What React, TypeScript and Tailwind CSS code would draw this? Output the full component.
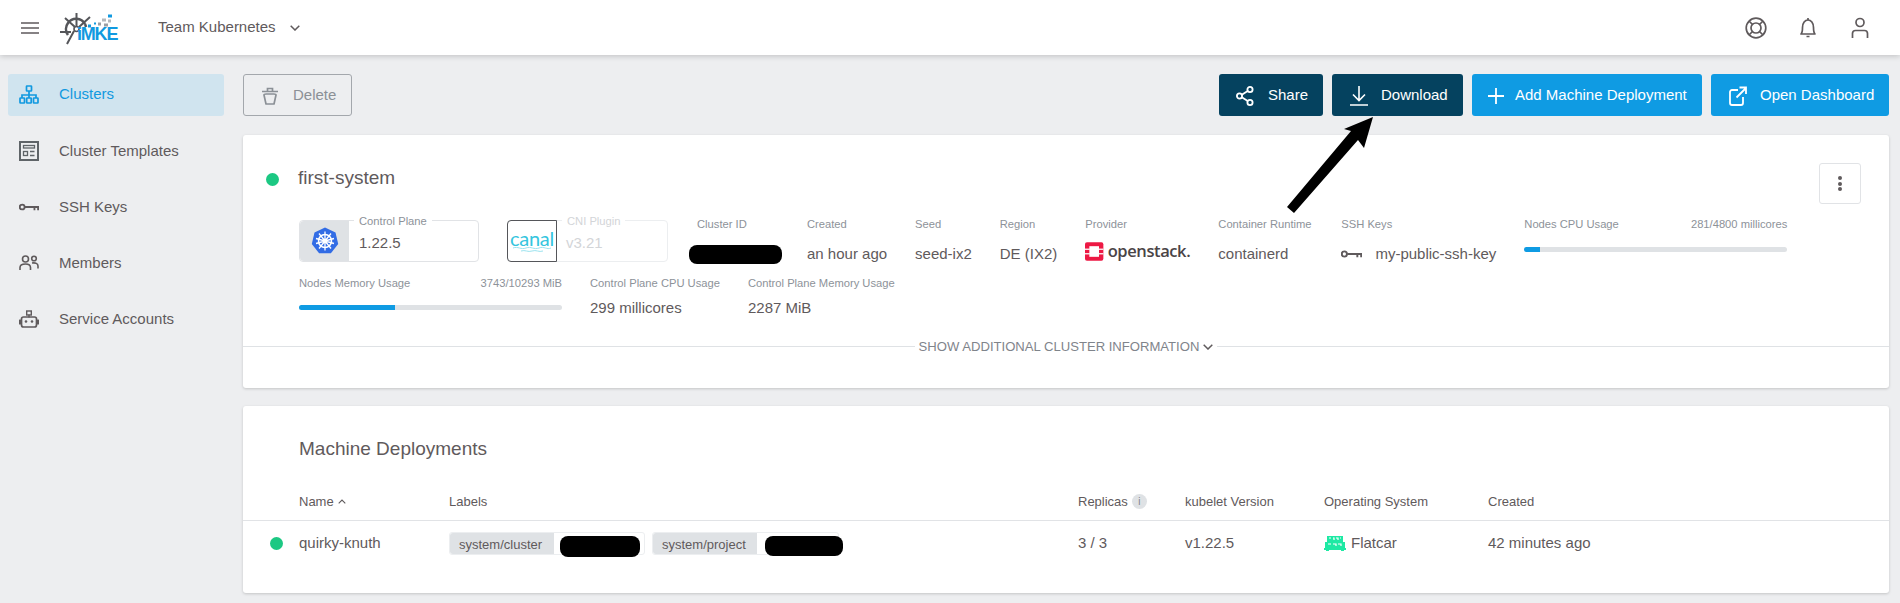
const sans = "font-['Liberation_Sans',Arial,sans-serif]";

function Hamburger() {
  return (
    <svg width="18" height="12" viewBox="0 0 18 12" fill="none" stroke="#5f5a5c" strokeWidth="1.6">
      <path d="M0 1h18M0 6h18M0 11h18" />
    </svg>
  );
}

function Logo() {
  return (
    <div className="relative w-[58px] h-[34px]">
      <svg width="58" height="34" viewBox="0 0 58 34" fill="none" className="absolute left-0 top-0">
        <g stroke="#55565a">
          <path strokeWidth="2.6" d="M25 13a10 10 0 0 0-17-1 10 10 0 0 0 0 12" />
          <path strokeWidth="2.6" d="M25 13a10 10 0 0 1 1 3" />
          <circle cx="16.500" cy="18" r="2.5" strokeWidth="1.6" />
          <path strokeWidth="2" d="M16.500 2v14M0 21h11M5 7l10 9M30 6l-11 10M14 20l-7 13" />
        </g>
        <rect x="48" y="3.500" width="4" height="3" fill="#1199e0" />
        <rect x="42" y="7.500" width="4" height="3" fill="#b5b8bc" />
        <rect x="48" y="8.500" width="3" height="3" fill="#b5b8bc" />
        <rect x="38" y="11.500" width="3" height="3" fill="#9b9ea3" />
        <rect x="44" y="12.500" width="4" height="3" fill="#9b9ea3" />
        <rect x="34" y="11.500" width="2" height="2" fill="#1199e0" />
        <rect x="28" y="13.500" width="3" height="3" fill="#1199e0" />
      </svg>
      <span className="absolute left-[17px] top-[13px] text-[18px] leading-[20px] font-bold tracking-[-1.2px] text-[#1199e0]">iMKE</span>
    </div>
  );
}

function TopIcons() {
  return (
    <div className="flex items-center gap-[30px] text-[#5f5a5c]">
      <svg width="22" height="22" viewBox="0 0 22 22" fill="none" stroke="currentColor" strokeWidth="1.7">
        <circle cx="11" cy="11" r="9.8" />
        <circle cx="11" cy="11" r="5" />
        <path d="M4 4l3.5 3.5M18 4l-3.5 3.5M4 18l3.5-3.5M18 18l-3.5-3.5" />
      </svg>
      <svg width="22" height="22" viewBox="0 0 22 22" fill="none" stroke="currentColor" strokeWidth="1.7">
        <path d="M4 17c1.500-1.500 1.500-3 1.500-6.500C5.500 6 8 3 11 3s5.500 3 5.500 7.500c0 3.500 0 5 1.500 6.500z" strokeLinejoin="round" />
        <path d="M9.500 19.500h3M11 1v2" />
      </svg>
      <svg width="22" height="22" viewBox="0 0 22 22" fill="none" stroke="currentColor" strokeWidth="1.7">
        <circle cx="11" cy="5.500" r="4" />
        <path d="M3.500 21v-4.500a3 3 0 0 1 3-3h9a3 3 0 0 1 3 3V21" />
      </svg>
    </div>
  );
}

function ClusterIcon({ color }: { color: string }) {
  return (
    <svg width="20" height="19" viewBox="0 0 20 19" fill="none" stroke={color} strokeWidth="1.7">
      <rect x="7.500" y="1" width="5" height="5" rx="0.500" />
      <rect x="1" y="13" width="4.500" height="5" rx="0.500" />
      <rect x="7.700" y="13" width="4.500" height="5" rx="0.500" />
      <rect x="14.500" y="13" width="4.500" height="5" rx="0.500" />
      <path d="M10 6v7M3 13v-3h14v3" />
    </svg>
  );
}

function TemplatesIcon() {
  return (
    <svg width="20" height="20" viewBox="0 0 20 20" fill="none" stroke="#5f6468" strokeWidth="2">
      <rect x="1" y="1" width="18" height="18" />
      <rect x="4.500" y="4.500" width="11" height="2.500" strokeWidth="1.300" />
      <rect x="4.500" y="10.500" width="4" height="4" strokeWidth="1.300" />
      <path d="M11 10.500h4.500M11 14.500h4.500" strokeWidth="1.500" />
    </svg>
  );
}

function KeyIcon() {
  return (
    <svg width="22" height="10" viewBox="0 0 22 10" fill="none" stroke="#5f5a5c" strokeWidth="2">
      <circle cx="3.500" cy="5" r="2.700" />
      <path d="M6.500 5H22M17 5v3.500M21 5v3.500" />
    </svg>
  );
}

function MembersIcon() {
  return (
    <svg width="20" height="16" viewBox="0 0 20 16" fill="none" stroke="#5f5a5c" strokeWidth="1.600">
      <circle cx="6.500" cy="4" r="3" />
      <circle cx="15" cy="3.500" r="2.300" />
      <path d="M1 15v-2.500C1 10 3 9 6.500 9s5 1 5 3.500V15M13 8c3.500-.500 6 .500 6 3v2.500" />
    </svg>
  );
}

function RobotIcon() {
  return (
    <svg width="20" height="18" viewBox="0 0 20 18" fill="#5f5a5c" stroke="none">
      <rect x="7.700" y="1" width="4.600" height="4" fill="none" stroke="#5f5a5c" strokeWidth="1.400" />
      <rect x="9.300" y="4.500" width="1.400" height="3" />
      <rect x="2.500" y="7" width="15" height="10" rx="2" fill="none" stroke="#5f5a5c" strokeWidth="1.700" />
      <rect x="0" y="9.500" width="2" height="5" rx="0.500" />
      <rect x="18" y="9.500" width="2" height="5" rx="0.500" />
      <circle cx="7" cy="11.500" r="1.300" />
      <circle cx="13" cy="11.500" r="1.300" />
    </svg>
  );
}

function TrashIcon() {
  return (
    <svg width="16" height="18" viewBox="0 0 16 18" fill="none" stroke="#8b9096" strokeWidth="1.700">
      <path d="M0 4.500h16M5.500 4V1.500h5V4" />
      <path d="M2 8c0-1 1-1 2-1h8c1 0 2 0 2 1l-2 9H4z" strokeLinejoin="round" />
    </svg>
  );
}

function ShareIcon() {
  return (
    <svg width="18" height="20" viewBox="0 0 18 20" fill="none" stroke="white" strokeWidth="1.800">
      <circle cx="14" cy="3.500" r="2.600" />
      <circle cx="3.500" cy="10" r="2.600" />
      <circle cx="14" cy="16.500" r="2.600" />
      <path d="M5.800 8.700l5.900-3.800M5.800 11.300l5.900 3.800" />
    </svg>
  );
}

function DownloadIcon() {
  return (
    <svg width="18" height="20" viewBox="0 0 18 20" fill="none" stroke="white" strokeWidth="1.600">
      <path d="M9 0v14M3 8.500l6 6 6-6M0 19h18" />
    </svg>
  );
}

function PlusIcon() {
  return (
    <svg width="16" height="16" viewBox="0 0 16 16" fill="none" stroke="white" strokeWidth="1.800">
      <path d="M8 0v16M0 8h16" />
    </svg>
  );
}

function OpenIcon() {
  return (
    <svg width="18" height="20" viewBox="0 0 18 20" fill="none" stroke="white" strokeWidth="1.800">
      <path d="M9 4H3a2 2 0 0 0-2 2v11a2 2 0 0 0 2 2h9a2 2 0 0 0 2-2v-6" />
      <path d="M7.500 11.500L17 2M10.500 1.500H17V8" />
    </svg>
  );
}

function K8sIcon() {
  return (
    <svg width="28" height="28" viewBox="0 0 28 28">
      <path d="M14 .500l10.500 5 2.700 11.500-7.300 9.300H8.100L.800 17l2.700-11.500z" fill="#326ce5" />
      <g fill="none" stroke="white">
        <circle cx="14" cy="14" r="6.500" strokeWidth="1.500" />
        <circle cx="14" cy="14" r="1.700" strokeWidth="1.300" />
        <path strokeWidth="1.300" d="M14 4.500v19M5 11.500l18 5M23 11.500l-18 5M8 6.500l12 15M20 6.500l-12 15" />
      </g>
    </svg>
  );
}

function OpenstackIcon() {
  return (
    <svg width="19" height="19" viewBox="0 0 19 19">
      <rect width="19" height="19" rx="2" fill="#ed1944" />
      <rect x="4.500" y="4" width="10" height="11" fill="white" />
      <rect x="0" y="6.500" width="5" height="1.300" fill="white" />
      <rect x="0" y="11.200" width="5" height="1.300" fill="white" />
      <rect x="14" y="6.500" width="5" height="1.300" fill="white" />
      <rect x="14" y="11.200" width="5" height="1.300" fill="white" />
    </svg>
  );
}

function FlatcarIcon() {
  return (
    <svg width="22" height="15" viewBox="0 0 22 15">
      <rect x="3" y="0" width="16" height="6" fill="#1ee9a4" />
      <rect x="1" y="6" width="20" height="6" fill="#1ee9a4" />
      <rect x="0" y="12" width="22" height="2" fill="#1ee9a4" />
      <path d="M5 2h2M9 2h1v2M12 2h2v2M16 2h1M4 8h3M9 8h3v2M14 8h3v2" stroke="white" strokeWidth="1.200" fill="none" />
      <rect x="2" y="14" width="3" height="1" fill="#1ee9a4" />
      <rect x="17" y="14" width="3" height="1" fill="#1ee9a4" />
    </svg>
  );
}

function CanalMark() {
  return (
    <div className="flex flex-col items-center">
      <span className="font-['Lato',sans-serif] text-[20px] leading-[16px] tracking-[-0.3px] text-[#35c5de]">canal</span>
      <svg width="38" height="7" viewBox="0 0 38 7" fill="none" stroke="#9be3ef" strokeWidth="1">
        <path d="M0 2c5-2 8 2 13 0s8 2 13 0 8 2 12 0M8 5c4-1.500 7 1.500 11 0s7 1.500 11 0" />
      </svg>
    </div>
  );
}

function Chevron({ className }: { className: string }) {
  return (
    <svg className={className} viewBox="0 0 10 6" fill="none" stroke="#5f5a5c" strokeWidth="1.500">
      <path d="M.700 .700L5 5l4.300-4.300" />
    </svg>
  );
}

function Label({ children }: { children: React.ReactNode }) {
  return <div className="text-[11.2px] leading-4 text-[#8d9299] whitespace-nowrap">{children}</div>;
}

function Info({ label, value, gap, className = "" }: { label: string; value: React.ReactNode; gap: string; className?: string }) {
  return (
    <div className={`shrink-0 ${className}`}>
      <Label>{label}</Label>
      <div className={`${gap} text-[15px] leading-5 text-[#5f5a5c] whitespace-nowrap`}>{value}</div>
    </div>
  );
}

function Usage({ label, amount, percent, gap }: { label: string; amount: string; percent: number; gap: string }) {
  return (
    <div className="w-[263px] shrink-0">
      <div className="flex justify-between">
        <Label>{label}</Label>
        <Label>{amount}</Label>
      </div>
      <div className={`${gap} h-[5px] rounded-sm bg-[#dfe2e5] overflow-hidden`}>
        <div className="h-full bg-[#0f9be3]" style={{ width: `${percent}%` }} />
      </div>
    </div>
  );
}

function Redacted({ className }: { className: string }) {
  return <div className={`bg-black rounded-[8px] ${className}`} />;
}

function KeyedBox({ label, value, wide, faded, icon, iconClass }: { label: string; value: string; wide: string; faded?: boolean; icon: React.ReactNode; iconClass: string }) {
  return (
    <div className={`relative ${wide} h-[42px] mt-[4px] shrink-0 flex rounded-[4px] border ${faded ? "border-[#eceef0]" : "border-[#e1e3e6]"}`}>
      <div className={`${iconClass} shrink-0 flex items-center justify-center`}>{icon}</div>
      <div className={`pl-[10px] pt-[12px] text-[15px] leading-5 ${faded ? "text-[#d3d5d8]" : "text-[#5f5a5c]"}`}>{value}</div>
      <div className={`absolute top-[-8px] px-[5px] bg-white text-[11.2px] leading-4 whitespace-nowrap left-[54px] ${faded ? "text-[#d3d5d8]" : "text-[#8d9299]"}`}>{label}</div>
    </div>
  );
}

const navItems = [
  { label: "Clusters", icon: <ClusterIcon color="#1199e0" />, active: true },
  { label: "Cluster Templates", icon: <TemplatesIcon /> },
  { label: "SSH Keys", icon: <KeyIcon /> },
  { label: "Members", icon: <MembersIcon /> },
  { label: "Service Accounts", icon: <RobotIcon /> },
];

const tableCols = "grid grid-cols-[56px_150px_629px_107px_139px_164px_1fr] items-center";

export default function App() {
  return (
    <div className={`${sans} relative h-[603px] overflow-hidden bg-[#edeef0]`}>
      {/* Header */}
      <header className="h-[55px] bg-white shadow-[0_1px_6px_rgba(0,0,0,0.2)] flex items-center pl-[21px] pr-[29px] relative z-10">
        <Hamburger />
        <div className="ml-[21px]"><Logo /></div>
        <span className="ml-[40px] text-[15px] text-[#5f5a5c]">Team Kubernetes</span>
        <Chevron className="ml-[14px] w-[10px] h-[6px]" />
        <div className="ml-auto"><TopIcons /></div>
      </header>

      <div className="flex">
        {/* Sidebar */}
        <aside className="w-[243px] shrink-0 pt-[19px] pl-[8px] pr-[19px] flex flex-col gap-[14px]">
          {navItems.map((item) => (
            <div
              key={item.label}
              className={`h-[42px] rounded-[3px] flex items-center pl-[11px] ${item.active ? "pb-[2px] bg-[#d0e4ef] text-[#1199e0]" : "text-[#5f5a5c]"}`}
            >
              <span className="w-[20px] flex justify-center">{item.icon}</span>
              <span className="ml-[20px] text-[15px]">{item.label}</span>
            </div>
          ))}
        </aside>

        {/* Main */}
        <main className="flex-1 pr-[11px] pt-[19px]">
          <div className="flex items-center gap-[9px] h-[42px]">
            <button className="h-[42px] w-[109px] mr-auto rounded-[3px] border border-[#a3a7ac] flex items-center pl-[18px] pt-px text-[15px] text-[#8b9096]">
              <TrashIcon />
              <span className="ml-[15px]">Delete</span>
            </button>
            <button className="h-[42px] w-[104px] rounded-[3px] bg-[#05425f] text-white flex items-center pl-[17px] pt-px text-[15px]">
              <ShareIcon />
              <span className="ml-[14px]">Share</span>
            </button>
            <button className="h-[42px] w-[131px] rounded-[3px] bg-[#05425f] text-white flex items-center pl-[18px] pt-px text-[15px]">
              <DownloadIcon />
              <span className="ml-[13px]">Download</span>
            </button>
            <button className="h-[42px] w-[230px] rounded-[3px] bg-[#0f9be3] text-white flex items-center pl-[16px] pt-px text-[15px]">
              <PlusIcon />
              <span className="ml-[11px]">Add Machine Deployment</span>
            </button>
            <button className="h-[42px] w-[178px] rounded-[3px] bg-[#0f9be3] text-white flex items-center pl-[18px] pt-px text-[15px]">
              <OpenIcon />
              <span className="ml-[13px]">Open Dashboard</span>
            </button>
          </div>

          {/* Cluster card */}
          <section className="relative mt-[19px] h-[253px] rounded-[3px] bg-white shadow-[0_1px_3px_rgba(0,0,0,0.18)]">
            <div className="flex items-start h-[81px] pt-[28px] pr-[28px] pl-[23px]">
              <span className="mt-[10px] w-[13px] h-[13px] rounded-full bg-[#1cc883]" />
              <span className="ml-[19px] mt-[3px] text-[19px] leading-6 text-[#5f5a5c]">first-system</span>
              <button className="ml-auto w-[42px] h-[41px] rounded-[3px] border border-[#e1e3e6] flex flex-col items-center justify-center gap-[1.5px]">
                <i className="w-[4px] h-[4px] rounded-full bg-[#5f5a5c]" />
                <i className="w-[4px] h-[4px] rounded-full bg-[#5f5a5c]" />
                <i className="w-[4px] h-[4px] rounded-full bg-[#5f5a5c]" />
              </button>
            </div>

            <div className="flex flex-wrap gap-x-7 pl-[56px] pr-[28px]">
              {/* First row */}
              <div className="flex gap-x-7 w-full h-[59px]">
                <KeyedBox
                  label="Control Plane"
                  value="1.22.5"
                  wide="w-[180px]"
                  icon={<K8sIcon />}
                  iconClass="w-[49px] bg-[#dfe2e5] rounded-l-[4px]"
                />
                <KeyedBox
                  label="CNI Plugin"
                  value="v3.21"
                  wide="w-[161px]"
                  faded
                  icon={<CanalMark />}
                  iconClass="w-[50px] -m-px h-[42px] border border-[#55565a] rounded-l-[4px]"
                />
                <div className="relative w-[82px] ml-px shrink-0">
                  <Label>Cluster ID</Label>
                  <Redacted className="absolute left-[-8px] top-[29px] w-[93px] h-[19px]" />
                </div>
                <Info label="Created" value="an hour ago" gap="mt-[12px]" />
                <Info label="Seed" value="seed-ix2" gap="mt-[12px]" />
                <Info label="Region" value="DE (IX2)" gap="mt-[12px]" />
                <div className="w-[105px] shrink-0">
                  <Label>Provider</Label>
                  <div className="mt-[10px] flex items-center gap-[4px]">
                    <OpenstackIcon />
                    <span className="font-['Open_Sans',sans-serif] font-semibold text-[16.5px] leading-[19px] tracking-[-0.4px] -mt-[3px] text-[#4a4446]">openstack.</span>
                  </div>
                </div>
                <Info label="Container Runtime" value="containerd" gap="mt-[12px]" className="w-[95px]" />
                <div className="w-[155px] shrink-0">
                  <Label>SSH Keys</Label>
                  <div className="mt-[12px] flex items-center gap-[13px] text-[15px] leading-5 text-[#5f5a5c]">
                    <KeyIcon />
                    <span className="whitespace-nowrap">my-public-ssh-key</span>
                  </div>
                </div>
                <Usage label="Nodes CPU Usage" amount="281/4800 millicores" percent={6} gap="mt-[15px]" />
              </div>

              {/* Second row */}
              <Usage label="Nodes Memory Usage" amount="3743/10293 MiB" percent={36.500} gap="mt-[14px]" />
              <Info label="Control Plane CPU Usage" value="299 millicores" gap="mt-[7px]" />
              <Info label="Control Plane Memory Usage" value="2287 MiB" gap="mt-[7px]" />
            </div>

            <div className="absolute left-0 right-0 top-[203px] flex items-center">
              <div className="flex-1 h-px bg-[#dfe2e5]" />
              <span className="px-[4px] pt-px text-[13.1px] leading-4 text-[#7f848b] flex items-center gap-[4px]">
                SHOW ADDITIONAL CLUSTER INFORMATION
                <Chevron className="w-[10px] h-[6px]" />
              </span>
              <div className="flex-1 h-px bg-[#dfe2e5]" />
            </div>
          </section>

          {/* Machine deployments card */}
          <section className="mt-[18px] h-[187px] rounded-[3px] bg-white shadow-[0_1px_3px_rgba(0,0,0,0.18)]">
            <h2 className="pl-[56px] pt-[31px] text-[19px] leading-6 text-[#5f5a5c]">Machine Deployments</h2>
            <div className={`${tableCols} mt-[22px] h-[38px] border-b-[1.500px] border-[#e1e3e6] text-[13px] text-[#5f5a5c]`}>
              <span />
              <span className="flex items-center gap-[4px]">
                Name
                <svg width="8" height="5" viewBox="0 0 8 5" fill="none" stroke="#5f5a5c" strokeWidth="1.100">
                  <path d="M.700 4.300L4 1l3.300 3.300" />
                </svg>
              </span>
              <span>Labels</span>
              <span className="flex items-center gap-[4px]">
                Replicas
                <span className="w-[15px] h-[15px] rounded-full bg-[#dfe2e5] text-[10px] leading-[15px] text-center text-[#7f848b]">i</span>
              </span>
              <span>kubelet Version</span>
              <span>Operating System</span>
              <span>Created</span>
            </div>
            <div className={`${tableCols} h-[44px] text-[14px] text-[#5f5a5c]`}>
              <span className="ml-[27px] w-[13px] h-[13px] rounded-full bg-[#1cc883]" />
              <span className="text-[15px]">quirky-knuth</span>
              <div className="flex gap-[7px] text-[13px]">
                <div className="relative w-[196px] h-[23px] rounded-[3px] border border-[#eceef0]">
                  <div className="w-[104px] h-full bg-[#dfe2e5] rounded-l-[3px] pl-[9px] leading-[23px]">system/cluster</div>
                  <Redacted className="absolute left-[110px] top-[3px] w-[80px] h-[21px]" />
                </div>
                <div className="relative w-[187px] h-[23px] rounded-[3px] border border-[#eceef0]">
                  <div className="w-[104px] h-full bg-[#dfe2e5] rounded-l-[3px] pl-[9px] leading-[23px]">system/project</div>
                  <Redacted className="absolute left-[112px] top-[3px] w-[78px] h-[20px]" />
                </div>
              </div>
              <span className="text-[15px]">3 / 3</span>
              <span className="text-[15px]">v1.22.5</span>
              <span className="flex items-center gap-[5px] text-[15px]">
                <FlatcarIcon />
                Flatcar
              </span>
              <span className="text-[15px]">42 minutes ago</span>
            </div>
          </section>
        </main>
      </div>

      {/* Annotation arrow */}
      <svg className="absolute left-[1280px] top-[110px] z-20" width="100" height="110" viewBox="0 0 100 110">
        <polygon points="93,7 84,38 78,30 14,103 7,97 71,21 64,19" fill="#000" />
      </svg>
    </div>
  );
}
